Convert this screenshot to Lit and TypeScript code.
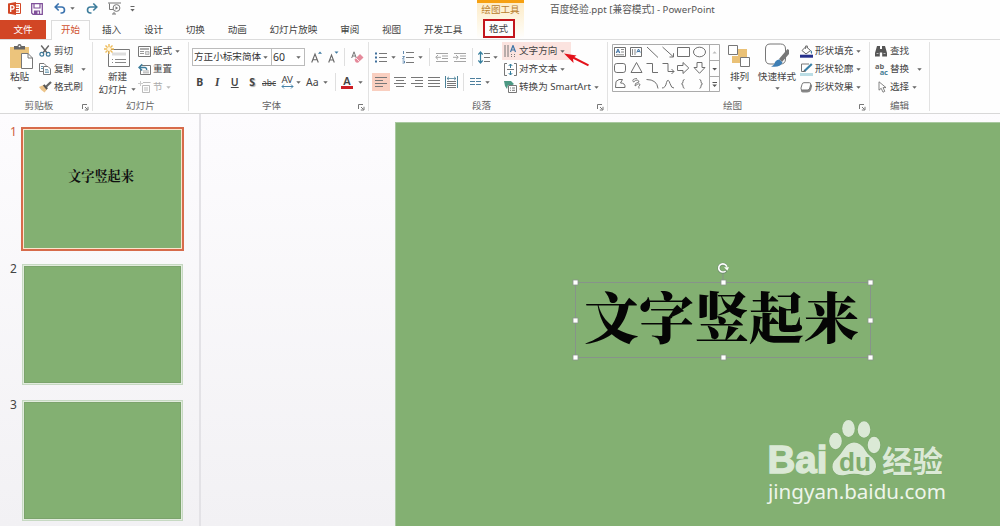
import { LitElement, html, svg, css } from "lit";
import { customElement } from "lit/decorators.js";

const icon = (w: number, h: number, body: unknown, cls = "") =>
  html`<svg class="ic ${cls}" width=${w} height=${h} viewBox="0 0 ${w} ${h}">${body}</svg>`;

const arrow = (cls = "") => html`<svg class="ic arrow ${cls}" width="5" height="3" viewBox="0 0 5 3"><path d="M.3 .2H4.7L2.5 2.8Z" fill="currentColor"/></svg>`;

const lines = (ys: number[], x1: number, x2: number) => svg`<path d=${ys.map((y) => `M${x1} ${y}H${x2}`).join("")} stroke="#777" fill="none"/>`;

const launcher = icon(7, 7, svg`<path d="M.5 5V.5H5M3 3L5.5 5.5M6 2.8V6H2.8" fill="none" stroke="#777"/>`, "launch");

const I = {
  ppt: icon(13, 13, svg`<path d="M6 1.5H12.5V11.5H6" fill="#fff" stroke="#d24726"/><path d="M8 4H11M8 6.5H11M8 9H11" stroke="#d24726"/><path d="M0 1.4L8 0V13L0 11.6Z" fill="#d24726"/><path d="M2.7 10V3.7H4.3A1.7 1.7 0 0 1 4.3 7.2H2.7" fill="none" stroke="#fff" stroke-width="1.3"/>`),
  save: icon(12, 12, svg`<path d="M.7 .7H11.3V11.3H2L.7 10Z" fill="#fff" stroke="#80519a" stroke-width="1.3"/><path d="M3 1V5H9V1M3.5 11V8H8.5V11" fill="none" stroke="#80519a" stroke-width="1.2"/><path d="M3.4 8H6.5V11H3.4Z" fill="#80519a"/>`),
  undo: icon(12, 11, svg`<path d="M1.5 4H7.5A3 3 0 0 1 7.5 10H6.5M4.7 .5L1.2 4L4.7 7.5" fill="none" stroke="#3b73af" stroke-width="1.6"/>`),
  redo: icon(12, 11, svg`<path d="M10.5 4H4.5A3 3 0 0 0 4.5 10H5.5M7.3 .5L10.8 4L7.3 7.5" fill="none" stroke="#3e7d9c" stroke-width="1.6"/>`),
  show: icon(13, 13, svg`<path d="M0 1H13M1.5 1.5V7.5H5M4 12H8M6 10V12" fill="none" stroke="#777"/><circle cx="8.5" cy="6" r="3.4" fill="#fff" stroke="#777"/><path d="M7.5 4.2L10.2 6L7.5 7.8Z" fill="#777"/>`),
  more: icon(5, 6, svg`<path d="M.5 .5H4.5" stroke="#666"/><path d="M.3 3H4.7L2.5 5.5Z" fill="#666"/>`),
  paste: icon(24, 25, svg`<path d="M0 3H19V24H0Z" fill="#ecc47c"/><path d="M4 2H7.5A2 2 0 0 1 11.5 2H15V5.5H4Z" fill="#666"/><circle cx="9.5" cy="2.3" r=".9" fill="#fff"/><path d="M11.5 9.5H18L22.5 14V24.5H11.5Z" fill="#fff" stroke="#777"/><path d="M18 9.5V14H22.5" fill="none" stroke="#777"/>`),
  cut: icon(12, 12, svg`<path d="M2.2 .5L8.3 8.2M9.8 .5L3.7 8.2" stroke="#666" stroke-width="1.4"/><circle cx="2.8" cy="9.3" r="1.9" fill="none" stroke="#3d7898" stroke-width="1.2"/><circle cx="9.2" cy="9.3" r="1.9" fill="none" stroke="#3d7898" stroke-width="1.2"/>`),
  copy: icon(12, 12, svg`<path d="M.5 .5H5L7 2.5V8.5H.5Z" fill="#fff" stroke="#777"/><path d="M2 3.5H4M2 5.5H4" stroke="#5f94ad"/><path d="M4.5 3.5H9L11.5 6V11.5H4.5Z" fill="#fff" stroke="#777"/><path d="M6 6.5H9M6 8H10M6 9.5H10" stroke="#5f94ad" stroke-width=".8"/>`),
  brush: icon(13, 12, svg`<path d="M0 6L4.5 4L8 8.5L5.5 11.5Q2.5 10 0 6Z" fill="#ecc48a"/><path d="M4.7 3.8L8.2 8" stroke="#555" stroke-width="2"/><path d="M7 5.8L12 1" stroke="#666" stroke-width="2.2"/>`),
  newSlide: icon(26, 24, svg`<path d="M4.5 5.5H25.5V22.5H4.5Z" fill="#fff" stroke="#777"/><path d="M8 8.5H22V11.5H8Z" fill="#ddd"/><path d="M8 15.5H9M11 15.5H22M8 18.5H9M11 18.5H22" stroke="#888"/><path d="M5 0V10M0 5H10M1.5 1.5L8.5 8.5M8.5 1.5L1.5 8.5" stroke="#eebb57" stroke-width="1.4"/><circle cx="5" cy="5" r="2" fill="#fff6dc"/>`),
  layout: icon(13, 11, svg`<path d="M.5 .5H12.5V10.5H.5Z" fill="#fff" stroke="#777"/><path d="M2 3H11" stroke="#888" stroke-width="1.4"/><path d="M2 5.5H6M2 7.5H6" stroke="#999"/><path d="M7.5 5.5H11V8.5H7.5Z" fill="#ddd" stroke="#999" stroke-width=".6"/>`),
  reset: icon(13, 12, svg`<path d="M2.5 2.5H12.5V11.5H2.5Z" fill="#fff" stroke="#777"/><path d="M5 8H11M5 9.8H11" stroke="#999" stroke-width=".8"/><path d="M1.5 4.5H7Q9 5 8.5 7M4.2 1.3L1 4.5L4.2 7.5" fill="none" stroke="#3e7d9c" stroke-width="1.4"/>`),
  section: icon(13, 12, svg`<path d="M2.5 0V5M0 2.5H5" stroke="#ccc"/><path d="M5 1.5H12.5M4.5 4.5H11.5V11.5H4.5ZM6 7H10M6 9H10" fill="none" stroke="#bbb"/>`),
  grow: icon(12, 12, svg`<path d="M.7 11.5L4 3L7.3 11.5M2 8.7H6.2" fill="none" stroke="#666" stroke-width="1.1"/><path d="M7 2.7H11L9 .5Z" fill="#3d79a0"/>`),
  shrink: icon(12, 12, svg`<path d="M.7 11.5L3.5 4L6.3 11.5M1.7 9H5.3" fill="none" stroke="#666" stroke-width="1.1"/><path d="M6.5 .5H10.5L8.5 2.8Z" fill="#3d79a0"/>`),
  eraser: icon(13, 12, svg`<path d="M.7 7L3 .8L5.3 7M1.5 5H4.5" fill="none" stroke="#777"/><path d="M3.5 8.5L9 3L12.5 6.5L7.3 11.5Q5.5 12 4.5 11Z" fill="#e58a9b"/><path d="M5 7L8.5 10.5" stroke="#fff" stroke-width=".8"/>`),
  bullets: icon(12, 11, svg`<path d="M0 1.5H2M0 5.5H2M0 9.5H2" stroke="#3e6f9c" stroke-width="2"/>${lines([1.5, 5.5, 9.5], 4, 12)}`),
  numbers: icon(12, 13, svg`<path d="M1.5 0V3M.5 5.5H2.5L.5 8H2.5M.5 10H2.5V12H.5" fill="none" stroke="#3e6f9c" stroke-width=".8"/>${lines([1.5, 6.5, 11.5], 4, 12)}`),
  outdent: icon(13, 9, svg`<g opacity=".65">${lines([.5, 8.5], 1, 13)}${lines([3, 5.5], 7, 13)}<path d="M6 4.3H1M3 2L.7 4.3L3 6.5" fill="none" stroke="#777"/></g>`),
  indent: icon(13, 9, svg`<g opacity=".65">${lines([.5, 8.5], 1, 13)}${lines([3, 5.5], 7, 13)}<path d="M0 4.3H5M3 2L5.3 4.3L3 6.5" fill="none" stroke="#777"/></g>`),
  spacing: icon(12, 13, svg`<path d="M2.5 1.5V11.5M.3 3.5L2.5 1L4.7 3.5M.3 9.5L2.5 12L4.7 9.5" fill="none" stroke="#377f9e" stroke-width="1.2"/>${lines([2.5, 6.5, 10.5], 6, 12)}`),
  left: icon(12, 10, svg`${lines([.5, 6.5], 0, 12)}${lines([3.5, 9.5], 0, 8)}`),
  center: icon(12, 10, svg`${lines([.5, 6.5], 0, 12)}${lines([3.5, 9.5], 2, 10)}`),
  right: icon(12, 10, svg`${lines([.5, 6.5], 0, 12)}${lines([3.5, 9.5], 4, 12)}`),
  justify: icon(12, 10, lines([.5, 3.5, 6.5, 9.5], 0, 12)),
  dist: icon(13, 12, svg`<path d="M.5 0V12M12.5 0V12" stroke="#4b8299"/><path d="M2 2.5H11M4 .8L2 2.5L4 4.2M9 .8L11 2.5L9 4.2" fill="none" stroke="#4b8299" stroke-width=".8"/>${lines([5.5, 7.5, 9.5, 11.5], 2, 11)}`),
  cols: icon(11, 8, svg`<path d="M0 .5H5M0 3.5H5M0 6.5H5M6 .5H11M6 3.5H11M6 6.5H11" stroke="#4d7f9d"/>`),
  direction: icon(13, 13, svg`<path d="M1 0V12M4 0V12" stroke="#777"/><path d="M7.5 9V12M10.5 9V12" stroke="#777" stroke-dasharray="1 1"/><path d="M6.5 7L9 .5L11.5 7M7.3 5H10.7" fill="none" stroke="#3d73a5" stroke-width="1.2"/>`),
  alignText: icon(13, 13, svg`<path d="M3 .5H.5V12.5H3M10 .5H12.5V12.5H10" fill="none" stroke="#777"/><path d="M3 6.5H10" stroke="#777"/><path d="M6.5 1V5M6.5 8V12M4.7 3L6.5 1L8.3 3M4.7 10L6.5 12L8.3 10" fill="none" stroke="#377f9e"/>`),
  smart: icon(13, 12, svg`<path d="M0 0H7L10 3L8.5 4L4 4L3 8L1 5Z" fill="#4c9883"/><path d="M4.5 4.5H12.5V11.5H4.5Z" fill="#fff" stroke="#777"/><path d="M6 7H7M8 7H11M6 9.3H7M8 9.3H11" stroke="#777"/>`),
  arrange: icon(23, 23, svg`<path d="M10 4H19V14H10ZM4 11H13V18H4Z" fill="#eac176"/><path d="M.5 .5H9.5V9.5H.5ZM12.5 12.5H21.5V21.5H12.5Z" fill="#fff" stroke="#777"/>`),
  styles: icon(25, 26, svg`<path d="M5 1H15.5Q20.5 1 20.5 6V16Q20.5 21 15.5 21H5Q.5 21 .5 16V6Q.5 1 5 1Z" fill="#fff" stroke="#777"/><path d="M22.5 6L24 7V11L17 19L14 16Z" fill="#777"/><path d="M14.5 16.5L17.5 19.5Q15 25 6 23.5Q9.5 22 10 19Q12 16 14.5 16.5Z" fill="#3f7fb5"/>`),
  fill: icon(13, 13, svg`<path d="M2 5.5L6 1.5L10.5 5.5L6 9Z" fill="#fff" stroke="#666"/><path d="M5.5 4V1Q6.5 -.5 7.5 1V3" fill="none" stroke="#666" stroke-width=".8"/><path d="M10.5 5Q12.7 6 11.8 9Q10.5 8.5 10.5 5Z" fill="#3e7da5"/><path d="M0 9.7H13V12.7H0Z" fill="#27318c"/>`),
  outline: icon(13, 13, svg`<path d="M9 1H1.5V8.5H4" fill="none" stroke="#777"/><path d="M4.5 8L11.8 1" stroke="#377fa6" stroke-width="2.2"/><path d="M3.4 9L4 6.8L5.8 8.5Z" fill="#555"/><path d="M0 10H13V13H0Z" fill="#bbdde5"/>`),
  effect: icon(13, 11, svg`<path d="M5 2H10Q12.5 2 12 4.5L11 8Q10 10.5 7 10.5H3Q.5 10 1 8" fill="#888"/><path d="M4 .7H9.3Q11 .7 10.6 2.7L9.8 6Q9.3 8 7.3 8H2.5Q.5 8 1 6L2 2.5Q2.3 .7 4 .7Z" fill="#fff" stroke="#777"/>`),
  find: icon(12, 12, svg`<path d="M2 1H5V4H7V1H10L12 8V11.5H7.2V7.5H4.8V11.5H0V8Z" fill="#555"/><path d="M1.5 8.5H3.5M8.5 8.5H10.5" stroke="#bbb"/>`),
  pointer: icon(9, 12, svg`<path d="M1 .8V9.2L3.2 7.3L5 11.2L6.8 10.3L5 6.6H8Z" fill="#fff" stroke="#777" stroke-width=".9"/>`),
};

const gallery = html`<svg class="gallery" width="108" height="48" viewBox="0 0 108 48">
  <g fill="none" stroke="#6f6f6f">
    <path d="M.5 .5H107.5V47.5H.5ZM97.5 .5V47.5M97.5 16.5H107.5M97.5 32.5H107.5" stroke="#ababab"/>
    <path d="M2.5 3.5H13.5V12.5H2.5ZM18.5 3.5H29.5V12.5H18.5Z"/>
    <path d="M9 5.5H12M9 8H12M4 10.8H12M20.5 5V11M23 5V11" stroke-width=".8"/>
    <path d="M4.2 9L6 5L7.8 9M4.8 7.8H7.2M24.8 8.5L26.5 5L28.3 8.5M25.5 7.5H27.7" stroke="#3d73a5"/>
    <path d="M35 3L46 13.5M50.5 3L61 12.5M61.5 9.2V13H57.5"/>
    <path d="M65.5 3.5H77.5V12.5H65.5Z"/><ellipse cx="87.5" cy="8" rx="6" ry="4.8"/>
    <rect x="2.5" y="19.5" width="11" height="9" rx="2.3"/><path d="M24.5 18.5L30 28.5H19Z"/>
    <path d="M34.5 19.5H40.5V28.5H46M50.5 19.5H56V27.5H62M59.5 25L62 27.5L59.5 30"/>
    <path d="M65.5 21.5H71V18.5L76.8 24L71 29.5V26.5H65.5ZM85 18.5H90V23.5H93L87.5 29.3L82 23.5H85Z"/>
    <path d="M4 37.5L7 35.5H10.5L8.5 39Q13.5 39 13 43.5H3.5Z"/>
    <path d="M25 34.5Q19 35 21.5 38Q26 34 27 38Q22 39 23 42Q28 38 28 41Q26 42 27 44.5" stroke-width=".9"/>
    <path d="M34.5 35.5Q45 35.5 46 44.5M50 44Q53.5 44 54.5 38.5Q56 33.5 58 39.5Q59.5 44.5 62 44"/>
    <path d="M72.5 35.5Q71 35.5 71 37.5Q71 39.7 69.5 39.9Q71 40 71 42.2Q71 44.3 72.5 44.3M87.5 35.5Q89 35.5 89 37.5Q89 39.7 90.5 39.9Q89 40 89 42.2Q89 44.3 87.5 44.3"/>
    <path d="M100.5 38.5H105" stroke="#555"/>
  </g>
  <path d="M100.5 9.5H104.7L102.6 7.2Z" fill="#bbb"/><path d="M100.3 24H105L102.6 26.6ZM100.3 40.5H105L102.6 43Z" fill="#555"/>
</svg>`;

@customElement("app-root")
export class AppRoot extends LitElement {
  static styles = css`
    :host { display: flex; flex-direction: column; width: 1000px; height: 526px; overflow: hidden; position: relative; background: #fefefe; color: #444; font: 9.6px/14px "Noto Sans", "Noto Sans CJK SC", sans-serif; white-space: nowrap; }
    * { box-sizing: border-box; }
    .ic { display: block; flex: none; }
    .arrow { color: #666; }
    .top { display: flex; height: 39px; flex: none; }
    .leftTop { width: 477px; display: flex; flex-direction: column; }
    .qat { display: flex; align-items: center; height: 20px; padding: 0 0 3px 8px; }
    .gA { margin-left: 10px; } .gB { margin-left: 11px; } .gC { margin-left: 4px; } .gD { margin-left: 11px; } .gE { margin-left: 10px; } .gF { margin-left: 9px; }
    .tabs { display: flex; height: 19px; align-items: center; gap: 22.7px; }
    .file { width: 46px; height: 19px; background: #d24625; color: #fff; text-align: center; line-height: 19px; margin-right: -17.7px; }
    .home { width: 39px; height: 20px; align-self: flex-start; border: 1px solid #dcdcdc; border-bottom: 0; background: #fefefe; color: #d0512f; text-align: center; line-height: 18px; margin-right: -10.7px; position: relative; z-index: 1; }
    .ctx { width: 47px; background: linear-gradient(#fdecc8, #fefaf0 75%, #fefefe); border-top: 3px solid #f6a011; display: flex; flex-direction: column; align-items: center; color: #b9802e; line-height: 14px; }
    .format { width: 32px; height: 19px; margin: 2px 4px 0 0; border: 2px solid #c3161c; color: #444; text-align: center; line-height: 15px; background: #fefefe; }
    .title { padding: 3px 0 0 26px; font-size: 9.7px; color: #555; }
    .ribbon { display: flex; flex: none; height: 75px; border-top: 1px solid #dcdcdc; border-bottom: 1px solid #d8d8d8; background: #fefefe; }
    .group { display: flex; flex-direction: column; border-right: 1px solid #e2e2e2; margin: 2px 0; height: 69px; flex: none; }
    .body { display: flex; height: 57px; }
    .foot { height: 15px; display: flex; align-items: center; justify-content: center; position: relative; color: #666; margin-top: -1px; padding-top: 5px; }
    .launch { position: absolute; right: 3px; bottom: 0; }
    .w1 { width: 93px; } .w2 { width: 96px; } .w3 { width: 180px; } .w4 { width: 239px; } .w5 { width: 262px; } .w6 { width: 60px; }
    .w1 .foot { padding-right: 14px; } .w2 .foot { padding-right: 0; } .w3 .foot { padding-right: 14px; } .w4 .foot { padding-right: 13px; } .w5 .foot { padding-right: 12px; }
    .big { display: flex; flex-direction: column; align-items: center; text-align: center; flex: none; line-height: 13px; }
    .big .pic { height: 28px; display: flex; align-items: center; justify-content: center; }
    .big .arrow { margin-top: 4px; }
    .inl { display: flex; align-items: center; gap: 4px; } .inl .arrow { margin: 0; }
    .paste { width: 39px; } .slide { width: 45px; margin-left: 2px; } .arr { width: 37px; margin-left: 1px; } .sty { width: 42px; margin-left: -2px; margin-right: 2px; }
    .paste .pic { padding-left: 4px; } .slide .pic { padding-right: 1px; }
    .list { display: flex; flex-direction: column; }
    .back { margin-left: -2px; }
    .item { display: flex; align-items: center; height: 18px; }
    .item .cell { width: 15px; flex: none; display: flex; }
    .item .arrow { margin: 1px 0 0 3px; }
    .item .far { margin-left: 8px; }
    .off { color: #aaa; } .off .arrow { color: #bbb; }
    .hot { background: #fbe3df; width: 69px; padding-left: 2px; margin-left: -2px; }
    .stack { display: flex; flex-direction: column; }
    .row1 { display: flex; align-items: center; height: 22px; margin-top: 4px; }
    .row2 { display: flex; align-items: center; height: 20px; margin-top: 4px; line-height: 15px; }
    .combo { height: 18px; border: 1px solid #bbb; display: flex; align-items: center; justify-content: space-between; padding: 0 3px 0 1px; color: #333; background: #fff; }
    .cf { width: 80px; margin-left: 3px; } .cs { width: 34px; margin-left: -1px; font-size: 10.5px; }
    .vr { width: 1px; height: 18px; background: #dfdfdf; flex: none; }
    .m1 { margin-left: 1px; } .m2 { margin-left: 2px; } .m3 { margin-left: 3px; } .m4 { margin-left: 4px; } .m5 { margin-left: 5px; } .m6 { margin-left: 6px; } .m7 { margin-left: 7px; } .m8 { margin-left: 8px; }
    .f { width: 17.5px; text-align: center; font-size: 10.5px; flex: none; }
    .b { font-weight: 700; } .i { font-style: italic; font-family: "Liberation Serif", serif; font-weight: 700; font-size: 11.5px; } .u { text-decoration: underline; font-weight: 600; } .s { font-weight: 700; text-shadow: 1px 1px 1px #aaa; }
    .abc { text-decoration: line-through; font-size: 8.5px; width: 15px; margin-left: 1px; }
    .av { width: 14px; margin-left: 3px; display: flex; flex-direction: column; align-items: center; font-size: 9.8px; line-height: 9px; flex: none; letter-spacing: -.4px; }
    .aa { width: 14px; margin-left: 5px; font-size: 10.5px; }
    .fc { width: 12px; height: 13px; border-bottom: 3px solid #cc1f25; text-align: center; line-height: 10px; font-size: 11px; font-weight: 600; margin-left: 5px; }
    .sel { width: 18px; height: 18px; background: #f9cfc0; display: flex; align-items: center; justify-content: center; margin-left: 3px; }
    .gallery { display: block; margin: 2px 0 0 4px; flex: none; }
    .rep { width: 13px; display: flex; flex-direction: column; font: 700 7.5px/6px "Noto Sans", sans-serif; color: #666; }
    .rep span + span { text-align: right; color: #4b8299; }
    .pointer { position: absolute; left: 564px; top: 51px; }
    .work { display: flex; flex: 1; min-height: 0; background: linear-gradient(#fdfcfe, #f2f1f4); }
    .thumbs { width: 201px; border-right: 2px solid #e3e2e6; flex: none; display: flex; flex-direction: column; padding-top: 13px; gap: 12px; }
    .trow { display: flex; align-items: flex-start; height: 124px; }
    .trow + .trow { height: 123.5px; padding-top: 1px; }
    .num { width: 21px; padding-left: 10px; font-size: 12px; line-height: 10px; flex: none; }
    .thumb { width: 161px; height: 121px; border: 1px solid #c6d9c2; padding: 1px; background: #e2ecde; margin-left: 1px; }
    .thumb i { display: block; height: 100%; background: #83b072; border: 1px solid #7ba36c; }
    .on .num { color: #d0603f; }
    .on .thumb { width: 163px; height: 124px; border: 2px solid #d76b4b; background: #fbe6cd; margin: 0; }
    .on .thumb i { display: flex; justify-content: center; padding: 36px 3px 0 0; font: 700 13.2px/20px "Noto Serif CJK SC", "Noto Serif SC", "Noto Sans CJK SC", serif; color: #111; border: 0; }
    .stage { flex: 1; padding: 8px 0 0 194px; display: flex; }
    .canvas { flex: 1; background: #83b072; border: solid #a9c8a0; border-width: 1px 0 0 1px; position: relative; }
    .box { position: absolute; left: 177px; top: 155px; width: 297px; height: 77px; display: flex; align-items: center; justify-content: center; font: 900 55px/76px "Noto Serif CJK SC", "Noto Serif SC", "Noto Sans CJK SC", serif; color: #050505; padding-bottom: 4px; }
    .frame { position: absolute; left: 175px; top: 139px; }
    .mark { position: absolute; left: 366px; top: 292px; }
  `;

  private item(ic: unknown, label: string, arr = "", cls = "") {
    return html`<div class="item ${cls}"><span class="cell">${ic}</span><span>${label}</span>${arr ? arrow(arr) : ""}</div>`;
  }

  render() {
    return html`
      <header class="top">
        <div class="leftTop">
          <div class="qat">${I.ppt}<span class="gA">${I.save}</span><span class="gB">${I.undo}</span>${arrow("gC")}<span class="gD">${I.redo}</span><span class="gE">${I.show}</span><span class="gF">${I.more}</span></div>
          <nav class="tabs"><span class="file">文件</span><span class="home">开始</span>
            ${["插入", "设计", "切换", "动画", "幻灯片放映", "审阅", "视图", "开发工具"].map((t) => html`<span>${t}</span>`)}
          </nav>
        </div>
        <div class="ctx"><span>绘图工具</span><span class="format">格式</span></div>
        <div class="title">百度经验.ppt [兼容模式] - PowerPoint</div>
      </header>
      <section class="ribbon">
        <div class="group w1"><div class="body">
          <div class="big paste"><span class="pic">${I.paste}</span><span>粘贴</span>${arrow()}</div>
          <div class="list">${this.item(I.cut, "剪切")}${this.item(I.copy, "复制", "far")}${this.item(I.brush, "格式刷")}</div>
        </div><div class="foot">剪贴板${launcher}</div></div>
        <div class="group w2"><div class="body">
          <div class="big slide"><span class="pic">${I.newSlide}</span><span>新建</span><span class="inl">幻灯片${arrow()}</span></div>
          <div class="list back">${this.item(I.layout, "版式", "a")}${this.item(I.reset, "重置")}${this.item(I.section, "节", "a", "off")}</div>
        </div><div class="foot">幻灯片</div></div>
        <div class="group w3"><div class="body stack">
          <div class="row1"><div class="combo cf"><span>方正小标宋简体</span>${arrow()}</div><div class="combo cs"><span>60</span>${arrow()}</div>
            <span class="m6">${I.grow}</span><span class="m5">${I.shrink}</span><span class="vr m4"></span><span class="m6">${I.eraser}</span></div>
          <div class="row2"><span class="f b m2">B</span><span class="f i">I</span><span class="f u">U</span><span class="f s">S</span><span class="abc">abc</span>
            <span class="av">AV${icon(13, 5, svg`<path d="M1 2.5H12M3 .5L1 2.5L3 4.5M10 .5L12 2.5L10 4.5" fill="none" stroke="#4783a8"/>`)}</span>${arrow("m2")}
            <span class="aa">Aa</span>${arrow("m3")}<span class="vr m7"></span><span class="fc">A</span>${arrow("m5")}</div>
        </div><div class="foot">字体${launcher}</div></div>
        <div class="group w4"><div class="body">
          <div class="stack">
            <div class="row1"><span class="m6">${I.bullets}</span>${arrow("m4")}<span class="m6">${I.numbers}</span>${arrow("m4")}<span class="vr m6"></span><span class="m5">${I.outdent}</span><span class="m5">${I.indent}</span><span class="vr m6"></span><span class="m5">${I.spacing}</span>${arrow("m3")}</div>
            <div class="row2"><span class="sel">${I.left}</span><span class="m4">${I.center}</span><span class="m5">${I.right}</span><span class="m5">${I.justify}</span><span class="m5">${I.dist}</span><span class="vr m5"></span><span class="m6">${I.cols}</span>${arrow("m4")}</div>
          </div>
          <div class="list m6">${this.item(I.direction, "文字方向", "a", "hot")}${this.item(I.alignText, "对齐文本", "a")}${this.item(I.smart, "转换为 SmartArt", "a")}</div>
        </div><div class="foot">段落${launcher}</div></div>
        <div class="group w5"><div class="body">${gallery}
          <div class="big arr"><span class="pic">${I.arrange}</span><span>排列</span>${arrow()}</div>
          <div class="big sty"><span class="pic">${I.styles}</span><span>快速样式</span>${arrow()}</div>
          <div class="list">${this.item(I.fill, "形状填充", "a")}${this.item(I.outline, "形状轮廓", "a")}${this.item(I.effect, "形状效果", "a")}</div>
        </div><div class="foot">绘图${launcher}</div></div>
        <div class="group w6"><div class="body">
          <div class="list m5">${this.item(I.find, "查找")}${this.item(html`<span class="rep"><span>ab</span><span>ac</span></span>`, "替换", "far")}${this.item(html`<span class="m3">${I.pointer}</span>`, "选择", "a")}</div>
        </div><div class="foot">编辑</div></div>
      </section>
      <main class="work">
        <aside class="thumbs">
          <div class="trow on"><span class="num">1</span><div class="thumb"><i>文字竖起来</i></div></div>
          <div class="trow"><span class="num">2</span><div class="thumb"><i></i></div></div>
          <div class="trow"><span class="num">3</span><div class="thumb"><i></i></div></div>
        </aside>
        <div class="stage"><div class="canvas">
          <div class="box">文字竖起来</div>
          <svg class="frame" width="306" height="102" viewBox="0 0 306 102">
            <rect x="4.5" y="20.5" width="295" height="75" fill="none" stroke="#87938a"/>
            <path d="M152 11V19" stroke="#87938a"/>
            <path d="M155.3 8.5A4.100 4.100 0 1 1 155.300 4" fill="none" stroke="#718f70" stroke-width="2.800"/>
            <path d="M154.600 9A4.100 4.100 0 1 1 155.800 4.800" fill="none" stroke="#fff" stroke-width="1.600"/><path d="M153 5.200H158L156.300 8.500Z" fill="#fff"/>
            ${[[4, 20], [152, 20], [299, 20], [4, 58], [299, 58], [4, 95], [152, 95], [299, 95]].map(([x, y]) => svg`<rect x=${x - 2} y=${y - 2} width="5" height="5" fill="#fff" stroke="#8a968a" stroke-width=".8"/>`)}
          </svg>
          <svg class="mark" width="190" height="96" viewBox="0 0 190 96">
            <g fill="#dbe9d6" stroke="#769f68" stroke-width=".6" paint-order="stroke">
              <text x="5.500" y="58" font-family="Liberation Sans" font-weight="700" font-size="39" textLength="60" lengthAdjust="spacingAndGlyphs" stroke="#dbe9d6" stroke-width="1.400">Bai</text>
              <ellipse cx="73.5" cy="26" rx="6.3" ry="8.3"/><ellipse cx="86.5" cy="13.5" rx="6.3" ry="8.5"/><ellipse cx="102" cy="14.5" rx="6.3" ry="8.3"/><ellipse cx="112" cy="30" rx="6.3" ry="8.3"/>
              <path d="M92 27.500Q99 27.500 103 35Q105 39 110.500 43Q116 49 113 55Q109 61.500 101 60Q92 57.500 83 60Q74 61.500 71 55Q69 48 75 43Q79 39 82 34Q86 27.500 92 27.500Z"/>
              <text x="120" y="56.500" font-family="Noto Sans CJK SC" font-weight="700" font-size="30" textLength="61" lengthAdjust="spacingAndGlyphs">经验</text>
              <text x="6" y="84" font-family="Noto Sans" font-size="20.500" textLength="178" lengthAdjust="spacingAndGlyphs" fill="#eef5eb" stroke="none">jingyan.baidu.com</text>
            </g>
            <text x="77" y="56" font-family="Liberation Sans" font-weight="700" font-size="25" textLength="32" lengthAdjust="spacingAndGlyphs" fill="#7fac6e">du</text>
          </svg>
        </div></div>
      </main>
      <svg class="pointer" width="26" height="16" viewBox="0 0 26 16"><path d="M8 6L24.500 14.300" stroke="#e3121b" stroke-width="2"/><path d="M0 2.500L12.500 4.500L9 7L9.500 12Z" fill="#e3121b"/></svg>
    `;
  }
}
